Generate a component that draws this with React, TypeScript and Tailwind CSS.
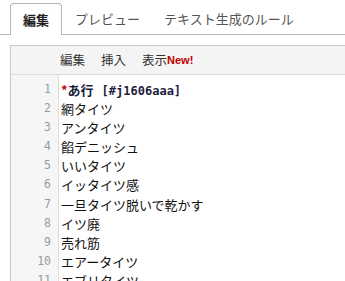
import React from "react";

const lines = [
  "",
  "網タイツ",
  "アンタイツ",
  "餡デニッシュ",
  "いいタイツ",
  "イッタイツ感",
  "一旦タイツ脱いで乾かす",
  "イツ廃",
  "売れ筋",
  "エアータイツ",
  "エブリタイツ",
];

export default function App() {
  const font = { fontFamily: '"Noto Sans CJK JP", "Noto Sans", sans-serif' };
  return (
    <div className="w-[345px] h-[281px] overflow-hidden bg-white" style={font}>
      {/* tabs */}
      <div className="flex items-end h-[35px] pl-[10px] border-b border-[#b5b5b5]">
        <div className="px-[12px] flex items-center border border-b-0 border-[#b5b5b5] rounded-t-[4px] bg-white -mb-px h-[32px] text-[13px] font-bold text-[#222]">
          編集
        </div>
        <div className="h-[31px] px-[13px] flex items-center text-[13px] text-[#555]">プレビュー</div>
        <div className="h-[31px] px-[11px] flex items-center text-[13px] text-[#555]">テキスト生成のルール</div>
      </div>
      {/* editor */}
      <div className="mt-[10px] ml-[10px] border-l border-t border-[#c8c8c8]">
        <div className="h-[29px] bg-[#f4f4f4] border-b border-[#dcdcdc] flex items-center pl-[49px] text-[12.5px] text-[#333]">
          <span>編集</span>
          <span className="ml-[16px]">挿入</span>
          <span className="ml-[16px]">表示</span>
          <span className="text-[11px] font-bold text-[#c00000]" style={{ fontFamily: '"Liberation Sans", Arial, sans-serif' }}>New!</span>
        </div>
        <div className="flex">
          <div className="w-[48px] bg-[#f6f6f6] border-r border-[#dedede] pt-[5px] pb-[20px]">
            {lines.map((_, i) => (
              <div key={i} className="h-[19.1px] leading-[19.1px] text-right pr-[7px] text-[11.5px] text-[#9a9a9a]" style={{ fontFamily: '"DejaVu Sans Mono", monospace' }}>
                {i + 1}
              </div>
            ))}
          </div>
          <div className="flex-1 pt-[5px] pl-[2px] text-[13px] text-[#111]">
            <div className="h-[19.1px] leading-[19.1px] font-bold text-[#1c1c3c] whitespace-nowrap">
              <span className="text-[#cc0000]">*</span>あ行<span className="inline-block w-[8px]"></span>
              <span className="text-[12px]" style={{ fontFamily: '"DejaVu Sans Mono", monospace' }}>[#j1606aaa]</span>
            </div>
            {lines.slice(1).map((t, i) => (
              <div key={i} className="h-[19.1px] leading-[19.1px] whitespace-nowrap">
                {t}
              </div>
            ))}
          </div>
        </div>
      </div>
    </div>
  );
}
